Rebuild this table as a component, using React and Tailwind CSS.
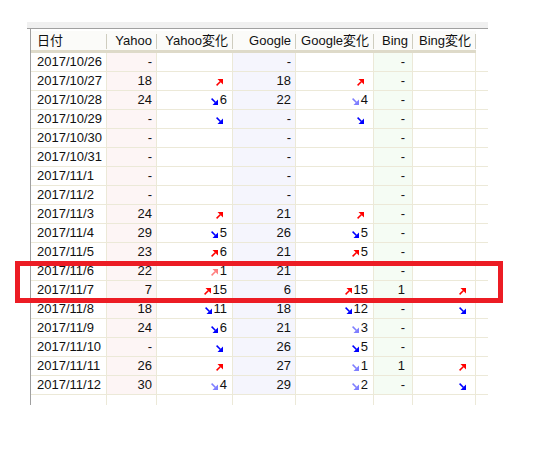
import React from "react";

const up = (n = "", pale = false) => ({ dir: "up", n, pale });
const dn = (n = "", pale = false) => ({ dir: "dn", n, pale });

const rows = [
  ["2017/10/26", "-", null, "-", null, "-", null],
  ["2017/10/27", "18", up(), "18", up(), "-", null],
  ["2017/10/28", "24", dn("6"), "22", dn("4", true), "-", null],
  ["2017/10/29", "-", dn(), "-", dn(), "-", null],
  ["2017/10/30", "-", null, "-", null, "-", null],
  ["2017/10/31", "-", null, "-", null, "-", null],
  ["2017/11/1", "-", null, "-", null, "-", null],
  ["2017/11/2", "-", null, "-", null, "-", null],
  ["2017/11/3", "24", up(), "21", up(), "-", null],
  ["2017/11/4", "29", dn("5"), "26", dn("5"), "-", null],
  ["2017/11/5", "23", up("6"), "21", up("5"), "-", null],
  ["2017/11/6", "22", up("1", true), "21", null, "-", null],
  ["2017/11/7", "7", up("15"), "6", up("15"), "1", up()],
  ["2017/11/8", "18", dn("11"), "18", dn("12"), "-", dn()],
  ["2017/11/9", "24", dn("6"), "21", dn("3", true), "-", null],
  ["2017/11/10", "-", dn(), "26", dn("5"), "-", null],
  ["2017/11/11", "26", up(), "27", dn("1", true), "1", up()],
  ["2017/11/12", "30", dn("4", true), "29", dn("2", true), "-", dn()],
];

const Arrow = ({ dir, pale }) => {
  const color =
    dir === "up" ? (pale ? "#ff7f7f" : "#ff0000") : pale ? "#7f7fff" : "#0000ff";
  return (
    <svg width="7" height="7" viewBox="0 0 7 7" className="mt-[3px]">
      {dir === "up" ? (
        <>
          <polygon points="1.5,0 7,0 7,5.5" fill={color} />
          <line x1="0.6" y1="6.4" x2="4.5" y2="2.5" stroke={color} strokeWidth="1.5" />
        </>
      ) : (
        <>
          <polygon points="1.5,7 7,7 7,1.5" fill={color} />
          <line x1="0.6" y1="0.6" x2="4.5" y2="4.5" stroke={color} strokeWidth="1.5" />
        </>
      )}
    </svg>
  );
};

const Change = ({ c, w }) => (
  <div className={`${w} flex items-center justify-end gap-[2px] border-r border-[#ece9d8] pr-[5px]`}>
    {c && <Arrow dir={c.dir} pale={c.pale} />}
    {c && (c.n ? <span>{c.n}</span> : <span className="w-[2px]" />)}
  </div>
);

const HeadCell = ({ w, label, left }) => (
  <div className={`${w} flex items-center`}>
    {left ? (
      <span className="flex-1 pl-[6px]">{label}</span>
    ) : (
      <span className="flex-1 pr-[4px] text-right">{label}</span>
    )}
    <div className="h-[15px] w-px bg-[#cfcdbf]" />
  </div>
);

export default function App() {
  return (
    <div
      className="relative min-h-screen bg-white pl-[27px] pt-[22px] text-[13px] text-[#111]"
      style={{ fontFamily: '"Liberation Sans", "Noto Sans CJK JP", sans-serif' }}
    >
      <div className="w-[461px]">
        <div className="h-[7px] border-b border-[#a0a0a0] bg-[#f0f0f0]" />
        <div className="ml-[3px] border-l border-[#a0a0a0] pt-[2px]">
          <div className="flex h-[22px] w-[445px] border-b-[3px] border-[#dedac9] bg-[#fbfbf9] pt-[1px]">
            <HeadCell w="w-[76px]" label="日付" left />
            <HeadCell w="w-[50px]" label="Yahoo" />
            <HeadCell w="w-[76px]" label="Yahoo変化" />
            <HeadCell w="w-[63px]" label="Google" />
            <HeadCell w="w-[78px]" label="Google変化" />
            <HeadCell w="w-[39px]" label="Bing" />
            <HeadCell w="w-[63px]" label="Bing変化" />
          </div>

          {rows.map(([date, y, yc, g, gc, b, bc]) => (
            <div key={date} className="flex h-[19px] w-[457px] border-b border-[#ece9d8] leading-[18px]">
              <div className="w-[76px] border-r border-[#ece9d8] pl-[6px]">{date}</div>
              <div className="w-[50px] border-r border-[#ece9d8] bg-[#fdf5f5] pr-[4px] text-right">{y}</div>
              <Change c={yc} w="w-[76px]" />
              <div className="w-[63px] border-r border-[#ece9d8] bg-[#f5f5fd] pr-[4px] text-right">{g}</div>
              <Change c={gc} w="w-[78px]" />
              <div className="w-[39px] border-r border-[#ece9d8] bg-[#f5fcf4] pr-[7px] text-right">{b}</div>
              <Change c={bc} w="w-[63px]" />
              <div className="w-[12px]" />
            </div>
          ))}

          <div className="flex h-[10px] w-[457px]">
            <div className="w-[76px] border-r border-[#ece9d8]" />
            <div className="w-[50px] border-r border-[#ece9d8]" />
            <div className="w-[76px] border-r border-[#ece9d8]" />
            <div className="w-[63px] border-r border-[#ece9d8]" />
            <div className="w-[78px] border-r border-[#ece9d8]" />
            <div className="w-[39px] border-r border-[#ece9d8]" />
            <div className="w-[63px] border-r border-[#ece9d8]" />
          </div>
        </div>
      </div>

      <div className="absolute left-[15px] top-[261px] h-[42px] w-[488px] border-[5px] border-[#ec1c24]" />
    </div>
  );
}
